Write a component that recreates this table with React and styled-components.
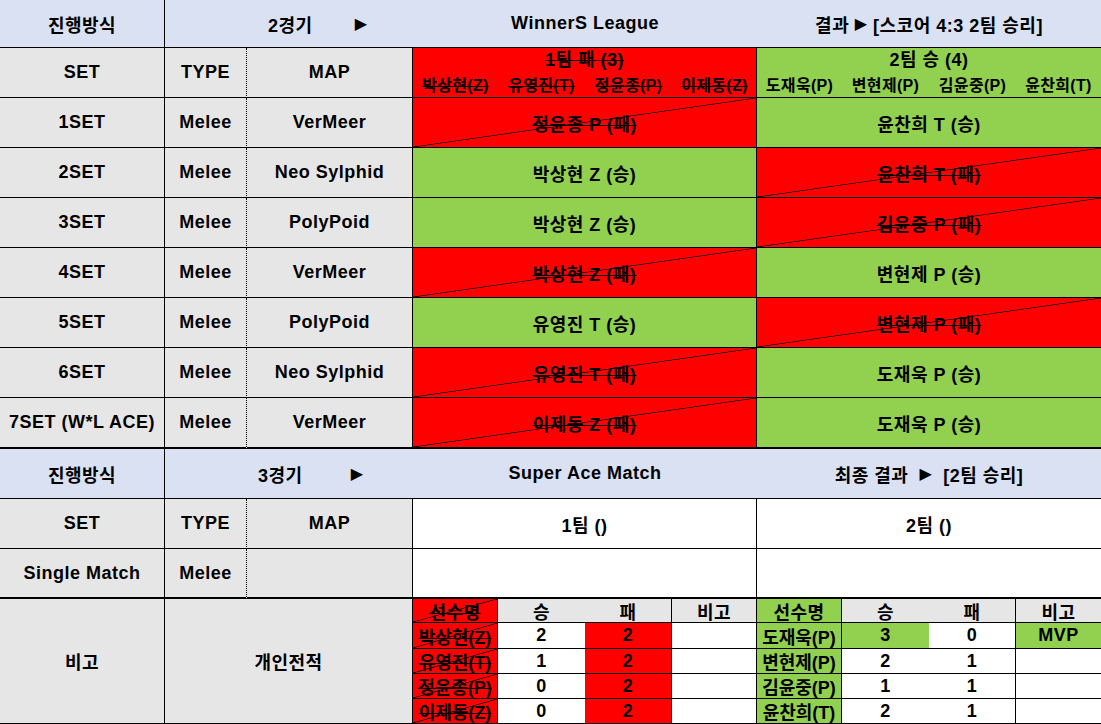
import React from 'react';
import styled, {createGlobalStyle, css} from 'styled-components';

const BLUE = '#D9E1F2'
const GRAY = '#E7E6E6'
const RED = '#FF0000'
const GREEN = '#92D050'
const WHITE = '#FFFFFF'

const GlobalStyle = createGlobalStyle`
  body {
    margin: 0;
    background: #fff;
  }
`

const Sheet = styled.div`
  display: grid;
  grid-template-columns: 165px 82px 166px 344px 344px;
  grid-template-rows: 48px repeat(7, 50px) 51px 50px 50px 50px 125px;
  width: 1101px;
  height: 724px;
  font-family: "Liberation Sans", "Noto Sans CJK KR", sans-serif;
  font-weight: bold;
  font-size: 18px;
  letter-spacing: 0.5px;
  color: #000;
`

// 진 칸: 빨간 배경 + 대각선
const lostStyle = css`
  background: linear-gradient(
      to bottom right,
      transparent calc(50% - 0.7px),
      #000 50%,
      transparent calc(50% + 0.7px)
    ),
    ${RED};
`

const borderRight = (kind) => {
  if (kind === 'dotted') return '1px dotted #000'
  if (kind === 'none') return '0'
  return '1px solid #000'
}

const Cell = styled.div`
  grid-column: span ${p => p.$span || 1};
  display: flex;
  align-items: center;
  justify-content: ${p => (p.$pad ? 'flex-start' : 'center')};
  padding-left: ${p => p.$pad || 0}px;
  box-sizing: border-box;
  min-width: 0;
  background: ${p => p.$bg || WHITE};
  border-right: ${p => borderRight(p.$right)};
  border-bottom: ${p => (p.$thick ? 2 : 1)}px solid #000;
  white-space: pre;
  ${p => p.$small && 'letter-spacing: 0;'}
  ${p => p.$lost && lostStyle}
  ${p => p.$strike && css`
    text-decoration: line-through;
    text-decoration-thickness: 1px;
  `}
`

const Arrow = styled.span`
  font-family: "DejaVu Sans", sans-serif;
  font-size: 16px;
  margin-left: ${p => p.$gap || 0}px;
`

const TeamHead = styled.div`
  display: flex;
  flex-direction: column;
  align-items: stretch;
  box-sizing: border-box;
  background: ${p => p.$bg};
  border-right: ${p => borderRight(p.$right)};
  border-bottom: 1px solid #000;
`

const TeamTitle = styled.div`
  margin-top: 2px;
  line-height: 21px;
  text-align: center;
  ${p => p.$strike && 'text-decoration: line-through; text-decoration-thickness: 1px;'}
`

const Roster = styled.div`
  display: grid;
  grid-template-columns: 85px 87px 87px 85px;
  justify-items: center;
  margin-top: 4px;
  line-height: 21px;
  font-size: 16px;
  letter-spacing: 0.3px;
  white-space: nowrap;
`

const RosterName = styled.span`
  ${p => p.$strike && 'text-decoration: line-through; text-decoration-thickness: 1px;'}
`

const Stats = styled.div`
  display: grid;
  grid-template-columns: 85px 87px 87px 85px;
  grid-template-rows: 24px 26px 25px 25px 25px;
`

const sets = [
  {set: '1SET', map: 'VerMeer', left: '정윤종 P (패)', right: '윤찬희 T (승)', leftWin: false},
  {set: '2SET', map: 'Neo Sylphid', left: '박상현 Z (승)', right: '윤찬희 T (패)', leftWin: true},
  {set: '3SET', map: 'PolyPoid', left: '박상현 Z (승)', right: '김윤중 P (패)', leftWin: true},
  {set: '4SET', map: 'VerMeer', left: '박상현 Z (패)', right: '변현제 P (승)', leftWin: false},
  {set: '5SET', map: 'PolyPoid', left: '유영진 T (승)', right: '변현제 P (패)', leftWin: true},
  {set: '6SET', map: 'Neo Sylphid', left: '유영진 T (패)', right: '도재욱 P (승)', leftWin: false},
  {set: '7SET (W*L ACE)', map: 'VerMeer', left: '이제동 Z (패)', right: '도재욱 P (승)', leftWin: false},
]

const team1 = ['박상현(Z)', '유영진(T)', '정윤종(P)', '이제동(Z)']
const team2 = ['도재욱(P)', '변현제(P)', '김윤중(P)', '윤찬희(T)']

const stats1 = [
  ['박상현(Z)', '2', '2', ''],
  ['유영진(T)', '1', '2', ''],
  ['정윤종(P)', '0', '2', ''],
  ['이제동(Z)', '0', '2', ''],
]
const stats2 = [
  ['도재욱(P)', '3', '0', 'MVP'],
  ['변현제(P)', '2', '1', ''],
  ['김윤중(P)', '1', '1', ''],
  ['윤찬희(T)', '2', '1', ''],
]

const Result = ({win, last, edge, children}) => (
  <Cell
    $bg={win ? GREEN : RED}
    $lost={!win}
    $strike={!win}
    $thick={last}
    $right={edge ? 'none' : 'solid'}
  >
    {children}
  </Cell>
)

const StatsTable = ({rows, lost}) => (
  <Stats>
    <Cell $bg={lost ? RED : GREEN} $lost={lost} $strike={lost}>선수명</Cell>
    <Cell $bg={GRAY} $right="none">승</Cell>
    <Cell $bg={GRAY}>패</Cell>
    <Cell $bg={GRAY} $right={lost ? 'solid' : 'none'}>비고</Cell>
    {rows.map((r, i) => (
      <React.Fragment key={r[0]}>
        <Cell $bg={lost ? RED : GREEN} $lost={lost} $strike={lost} $small>{r[0]}</Cell>
        <Cell $bg={!lost && i === 0 ? GREEN : WHITE} $right="none">{r[1]}</Cell>
        <Cell $bg={lost ? RED : WHITE}>{r[2]}</Cell>
        <Cell $bg={r[3] ? GREEN : WHITE} $right={lost ? 'solid' : 'none'}>{r[3]}</Cell>
      </React.Fragment>
    ))}
  </Stats>
)

const App = () => {
  return (
    <>
      <GlobalStyle/>
      <Sheet>
        {/* 2경기 */}
        <Cell $bg={BLUE}>진행방식</Cell>
        <Cell $bg={BLUE} $span={2} $right="none" $pad={103}>
          2경기<Arrow $gap={42}>▶</Arrow>
        </Cell>
        <Cell $bg={BLUE} $right="none">WinnerS League</Cell>
        <Cell $bg={BLUE} $right="none">
          결과 <Arrow>▶</Arrow> [스코어 4:3 2팀 승리]
        </Cell>

        <Cell $bg={GRAY}>SET</Cell>
        <Cell $bg={GRAY} $right="dotted">TYPE</Cell>
        <Cell $bg={GRAY}>MAP</Cell>
        <TeamHead $bg={RED}>
          <TeamTitle $strike>1팀 패 (3)</TeamTitle>
          <Roster>
            {team1.map(n => <RosterName key={n} $strike>{n}</RosterName>)}
          </Roster>
        </TeamHead>
        <TeamHead $bg={GREEN} $right="none">
          <TeamTitle>2팀 승 (4)</TeamTitle>
          <Roster>
            {team2.map(n => <RosterName key={n}>{n}</RosterName>)}
          </Roster>
        </TeamHead>

        {sets.map((s, i) => {
          let last = i === sets.length - 1
          return (
            <React.Fragment key={s.set}>
              <Cell $bg={GRAY} $thick={last}>{s.set}</Cell>
              <Cell $bg={GRAY} $right="dotted" $thick={last}>Melee</Cell>
              <Cell $bg={GRAY} $thick={last}>{s.map}</Cell>
              <Result win={s.leftWin} last={last}>{s.left}</Result>
              <Result win={!s.leftWin} last={last} edge>{s.right}</Result>
            </React.Fragment>
          )
        })}

        {/* 3경기 */}
        <Cell $bg={BLUE}>진행방식</Cell>
        <Cell $bg={BLUE} $span={2} $right="none" $pad={93}>
          3경기<Arrow $gap={48}>▶</Arrow>
        </Cell>
        <Cell $bg={BLUE} $right="none">Super Ace Match</Cell>
        <Cell $bg={BLUE} $right="none">
          최종 결과  <Arrow>▶</Arrow>  [2팀 승리]
        </Cell>

        <Cell $bg={GRAY}>SET</Cell>
        <Cell $bg={GRAY} $right="dotted">TYPE</Cell>
        <Cell $bg={GRAY}>MAP</Cell>
        <Cell>1팀 ()</Cell>
        <Cell $right="none">2팀 ()</Cell>

        <Cell $bg={GRAY} $thick>Single Match</Cell>
        <Cell $bg={GRAY} $right="dotted" $thick>Melee</Cell>
        <Cell $bg={GRAY} $thick/>
        <Cell $thick/>
        <Cell $right="none" $thick/>

        <Cell $bg={GRAY}>비고</Cell>
        <Cell $bg={GRAY} $span={2}>개인전적</Cell>
        <StatsTable rows={stats1} lost/>
        <StatsTable rows={stats2}/>
      </Sheet>
    </>
  );
};

export default App;
